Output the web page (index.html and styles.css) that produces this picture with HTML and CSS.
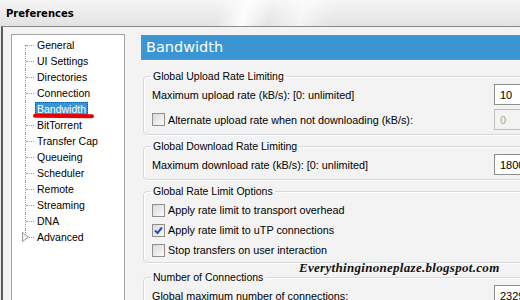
FILE: index.html
```html
<!DOCTYPE html>
<html lang="en">
<head>
  <meta charset="UTF-8" />
  <title>Preferences</title>
  <link rel="stylesheet" href="styles.css">
</head>
<body>
  <div class="titlebar">Preferences</div>
  <div class="window">
    <div class="tree">
      <ul>
        <li>General</li>
        <li>UI Settings</li>
        <li>Directories</li>
        <li>Connection</li>
        <li class="selected"><span>Bandwidth</span></li>
        <li>BitTorrent</li>
        <li>Transfer Cap</li>
        <li>Queueing</li>
        <li>Scheduler</li>
        <li>Remote</li>
        <li>Streaming</li>
        <li>DNA</li>
        <li class="expand">
          <svg class="expander" width="8" height="10" viewBox="0 0 8 10"><path d="M0.5 0.5 L6.5 5 L0.5 9.5 Z" fill="#f4f4f4" stroke="#9a9a9a"/></svg>
          Advanced
        </li>
      </ul>
    </div>
    <div class="main">
      <div class="header">Bandwidth</div>

      <fieldset class="group">
        <legend>Global Upload Rate Limiting</legend>
        <div class="row">
          <span>Maximum upload rate (kB/s): [0: unlimited]</span>
          <input class="num" type="text" value="10">
        </div>
        <div class="row">
          <label class="check"><span class="box"></span>Alternate upload rate when not downloading (kB/s):</label>
          <input class="num" type="text" value="0" disabled>
        </div>
      </fieldset>

      <fieldset class="group">
        <legend>Global Download Rate Limiting</legend>
        <div class="row">
          <span>Maximum download rate (kB/s): [0: unlimited]</span>
          <input class="num" type="text" value="1800">
        </div>
      </fieldset>

      <fieldset class="group options">
        <legend>Global Rate Limit Options</legend>
        <div class="crow"><label class="check"><span class="box"></span>Apply rate limit to transport overhead</label></div>
        <div class="crow"><label class="check"><span class="box checked"><svg width="9" height="9" viewBox="0 0 9 9"><path d="M1 4.5 L3.5 7 L8 1.5" fill="none" stroke="#2150b8" stroke-width="2"/></svg></span>Apply rate limit to uTP connections</label></div>
        <div class="crow"><label class="check"><span class="box"></span>Stop transfers on user interaction</label></div>
      </fieldset>

      <fieldset class="group last">
        <legend>Number of Connections</legend>
        <div class="row">
          <span>Global maximum number of connections:</span>
          <input class="num" type="text" value="2329">
        </div>
      </fieldset>
    </div>
    <div class="watermark">Everythinginoneplaze.blogspot.com</div>
  </div>
</body>
</html>
```

FILE: styles.css
```css
:root {
  --panel-bg: #f3f3f3;
  --line: #a0a0a0;
  --select: #3c93d8;
  --group-border: #d3dbe2;
}
body {
  margin: 0;
  width: 520px;
  height: 300px;
  overflow: hidden;
  background: #e9e9e9;
  font-family: 'Liberation Sans', Arial, sans-serif;
  font-size: 10.8px;
  color: #000;
}
.titlebar {
  height: 26px;
  padding-left: 6px;
  line-height: 28px;
  font-family: 'DejaVu Sans', sans-serif;
  font-weight: bold;
  font-size: 10px;
  background:
    linear-gradient(105deg, rgba(255,255,255,0) 42%, rgba(255,255,255,0.9) 47%, rgba(255,255,255,0) 52%, rgba(255,255,255,0.6) 58%, rgba(255,255,255,0) 64%),
    linear-gradient(#f6f6f6, #e2e2e2);
}
.window {
  position: relative;
  display: flex;
  align-items: flex-start;
  box-sizing: border-box;
  width: 519px;
  height: 274px;
  overflow: hidden;
  margin-left: 1px;
  padding: 7px 0 0 8px;
  border-left: 2px solid #5c5c5c;
  border-top: 1px solid #8a8a8a;
  background: var(--panel-bg);
}

/* tree */
.tree {
  flex: none;
  width: 112px;
  height: 280px;
  background: #fff;
  border: 1px solid #a5a5a5;
}
.tree ul {
  list-style: none;
  margin: 0;
  padding: 2px 0 0;
  font-size: 10.5px;
}
.tree li {
  position: relative;
  height: 16px;
  line-height: 16px;
  padding-left: 25px;
}
.tree li::before {
  content: '';
  position: absolute;
  left: 14px;
  top: 8px;
  width: 8px;
  border-top: 1px dotted var(--line);
}
.tree li::after {
  content: '';
  position: absolute;
  left: 13px;
  top: 0;
  bottom: 0;
  border-left: 1px dotted var(--line);
}
.tree li:first-child::after {
  top: 8px;
}
.tree li:last-child::after {
  bottom: 8px;
}
.tree li.selected span {
  display: inline-block;
  margin-left: -2px;
  padding: 0 2px;
  height: 15px;
  line-height: 15px;
  color: #fff;
  background: var(--select);
  outline: 1px dotted #1c4f7c;
  outline-offset: -1px;
}
.tree li.selected::before {
  border-top-color: transparent;
}
.tree li.selected span::after {
  content: '';
  position: absolute;
  left: 21px;
  top: 13px;
  width: 61px;
  height: 4px;
  border-radius: 2px;
  background: #e80000;
  transform: rotate(0.5deg);
}
.expander {
  position: absolute;
  left: 10px;
  top: 3px;
  z-index: 1;
}

/* main panel */
.main {
  flex: none;
  width: 414px;
  margin-left: 16px;
  padding-top: 1px;
}
.header {
  height: 25px;
  box-sizing: border-box;
  padding-left: 4px;
  line-height: 23px;
  font-family: 'DejaVu Sans', sans-serif;
  font-size: 14.5px;
  color: #fff;
  background: #3a95d5;
  border: 1px solid #858585;
  border-right: none;
  box-shadow: 0 1px 0 #fff;
  margin-bottom: 9px;
}
.group {
  margin: 0 2px 4px;
  padding: 1px 8px 2px;
  border: 1px solid var(--group-border);
  border-radius: 4px;
  box-shadow: inset 1px 1px 0 #fff, 1px 1px 0 #fff;
}
.group legend {
  padding: 0 2px;
  margin-left: -1px;
  line-height: 14px;
  font-size: 10.5px;
}
.group.options {
  padding-top: 2px;
  margin-bottom: 7px;
}
.row {
  display: flex;
  align-items: center;
  height: 21px;
  margin-bottom: 4px;
}
.row:last-child {
  margin-bottom: 2px;
}
.crow {
  display: flex;
  align-items: center;
  height: 20px;
}
.num {
  margin-left: auto;
  width: 50px;
  height: 21px;
  box-sizing: border-box;
  padding: 0 5px;
  border: 1px solid #8e8e8e;
  background: #fff;
  font-family: 'Liberation Sans', Arial, sans-serif;
  font-size: 11px;
  color: #000;
}
.num:disabled {
  background: var(--panel-bg);
  border-color: #bdbdbd;
  color: #a5a5a5;
}
.check {
  display: flex;
  align-items: center;
}
.box {
  display: flex;
  align-items: center;
  justify-content: center;
  width: 11px;
  height: 11px;
  margin-right: 3px;
  border: 1px solid #8f8f8f;
  background: linear-gradient(135deg, #d8d8d8, #fbfbfb);
}

.watermark {
  position: absolute;
  left: 296px;
  top: 233px;
  font-family: 'Liberation Serif', serif;
  font-style: italic;
  font-weight: bold;
  font-size: 13px;
  letter-spacing: 0.3px;
  color: #111;
}
```
